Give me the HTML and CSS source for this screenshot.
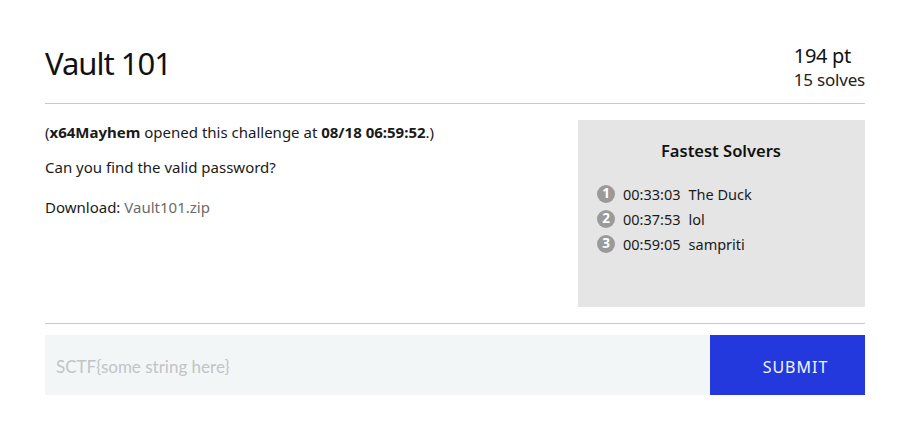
FILE: index.html
```html
<!DOCTYPE html>
<html>
<head>
<meta charset="utf-8">
<link rel="stylesheet" href="styles.css">
</head>
<body>
<div class="page">
  <header class="head">
    <h1 class="title">Vault 101</h1>
    <div class="score">
      <div class="pts">194 pt</div>
      <div class="solves">15 solves</div>
    </div>
  </header>
  <section class="main">
    <div class="desc">
      <p class="opened">(<b>x64Mayhem</b> opened this challenge at <b>08/18 06:59:52</b>.)</p>
      <p class="task">Can you find the valid password?</p>
      <p class="files">Download: <a class="dl" href="#">Vault101.zip</a></p>
    </div>
    <aside class="solvers">
      <h2 class="sol-title">Fastest Solvers</h2>
      <ol class="sol-list">
        <li><span class="rank">1</span><span class="time">00:33:03</span><span class="name">The Duck</span></li>
        <li><span class="rank">2</span><span class="time">00:37:53</span><span class="name">lol</span></li>
        <li><span class="rank">3</span><span class="time">00:59:05</span><span class="name">sampriti</span></li>
      </ol>
    </aside>
  </section>
  <form class="flag">
    <input class="flag-input" type="text" placeholder="SCTF{some string here}">
    <button class="submit" type="button">SUBMIT</button>
  </form>
</div>
</body>
</html>
```
FILE: styles.css
```css
html, body { margin: 0; padding: 0; background: #fff; }
body { font-family: "Noto Sans", "Open Sans", sans-serif; color: #1a1a1a; }
.page { width: 820px; margin-left: 45px; }
.head {
  display: flex; justify-content: space-between; align-items: flex-start;
  height: 104px; border-bottom: 1px solid #c8c8c8; box-sizing: border-box;
}
.title {
  margin: 0; padding-top: 38px; font-weight: 400; font-size: 31px;
  letter-spacing: -1px; line-height: 50px; color: #111;
}
.score { text-align: left; padding-top: 44px; }
.pts { font-size: 20px; line-height: 24px; color: #111; letter-spacing: -0.3px; }
.solves { font-size: 17px; line-height: 24px; color: #222; letter-spacing: -0.2px; }
.main { display: flex; justify-content: space-between; padding: 16px 0 16px; border-bottom: 1px solid #c8c8c8; }
.desc { font-size: 15px; }
.desc p { margin: 0; line-height: 20px; }
.desc p.opened { margin-top: 2px; }
.desc p.task { margin-top: 15px; }
.desc p.files { margin-top: 20px; }
.desc b { font-weight: 700; }
.dl { color: #6b6b6b; text-decoration: none; }
.solvers { width: 287px; height: 187px; background: #e5e5e5; box-sizing: border-box; padding: 20px 20px 0 19px; }
.sol-title { margin: 0; text-align: center; font-size: 16.5px; font-weight: 600; line-height: 22px; color: #111; }
.sol-list { list-style: none; margin: 19px 0 0; padding: 0; font-size: 14.5px; }
.sol-list li { display: flex; align-items: center; height: 25px; }
.rank {
  width: 18px; height: 18px; border-radius: 50%; background: #9a9a9a; color: #fff;
  font-size: 13.5px; font-weight: 700; display: flex; align-items: center; justify-content: center;
  margin-right: 8px; line-height: 1;
}
.time { margin-right: 8px; }
.flag { display: flex; margin-top: 11px; height: 60px; }
.flag-input {
  flex: 1; border: 0; background: #f3f6f7; padding: 0 0 0 11px; box-sizing: border-box;
  font-family: Lato, "Noto Sans", sans-serif; font-size: 17px; color: #333;
  outline: none; margin: 0; height: 60px; padding-top: 3px;
}
.flag-input::placeholder { color: #c0c4c6; }
.submit {
  width: 155px; border: 0; background: #2339dd; color: #f4f5ff; margin: 0;
  font-family: "Noto Sans", sans-serif; font-size: 16px; letter-spacing: 1px; height: 60px;
  padding: 3px 0 0 16px; box-sizing: border-box;
}
```
